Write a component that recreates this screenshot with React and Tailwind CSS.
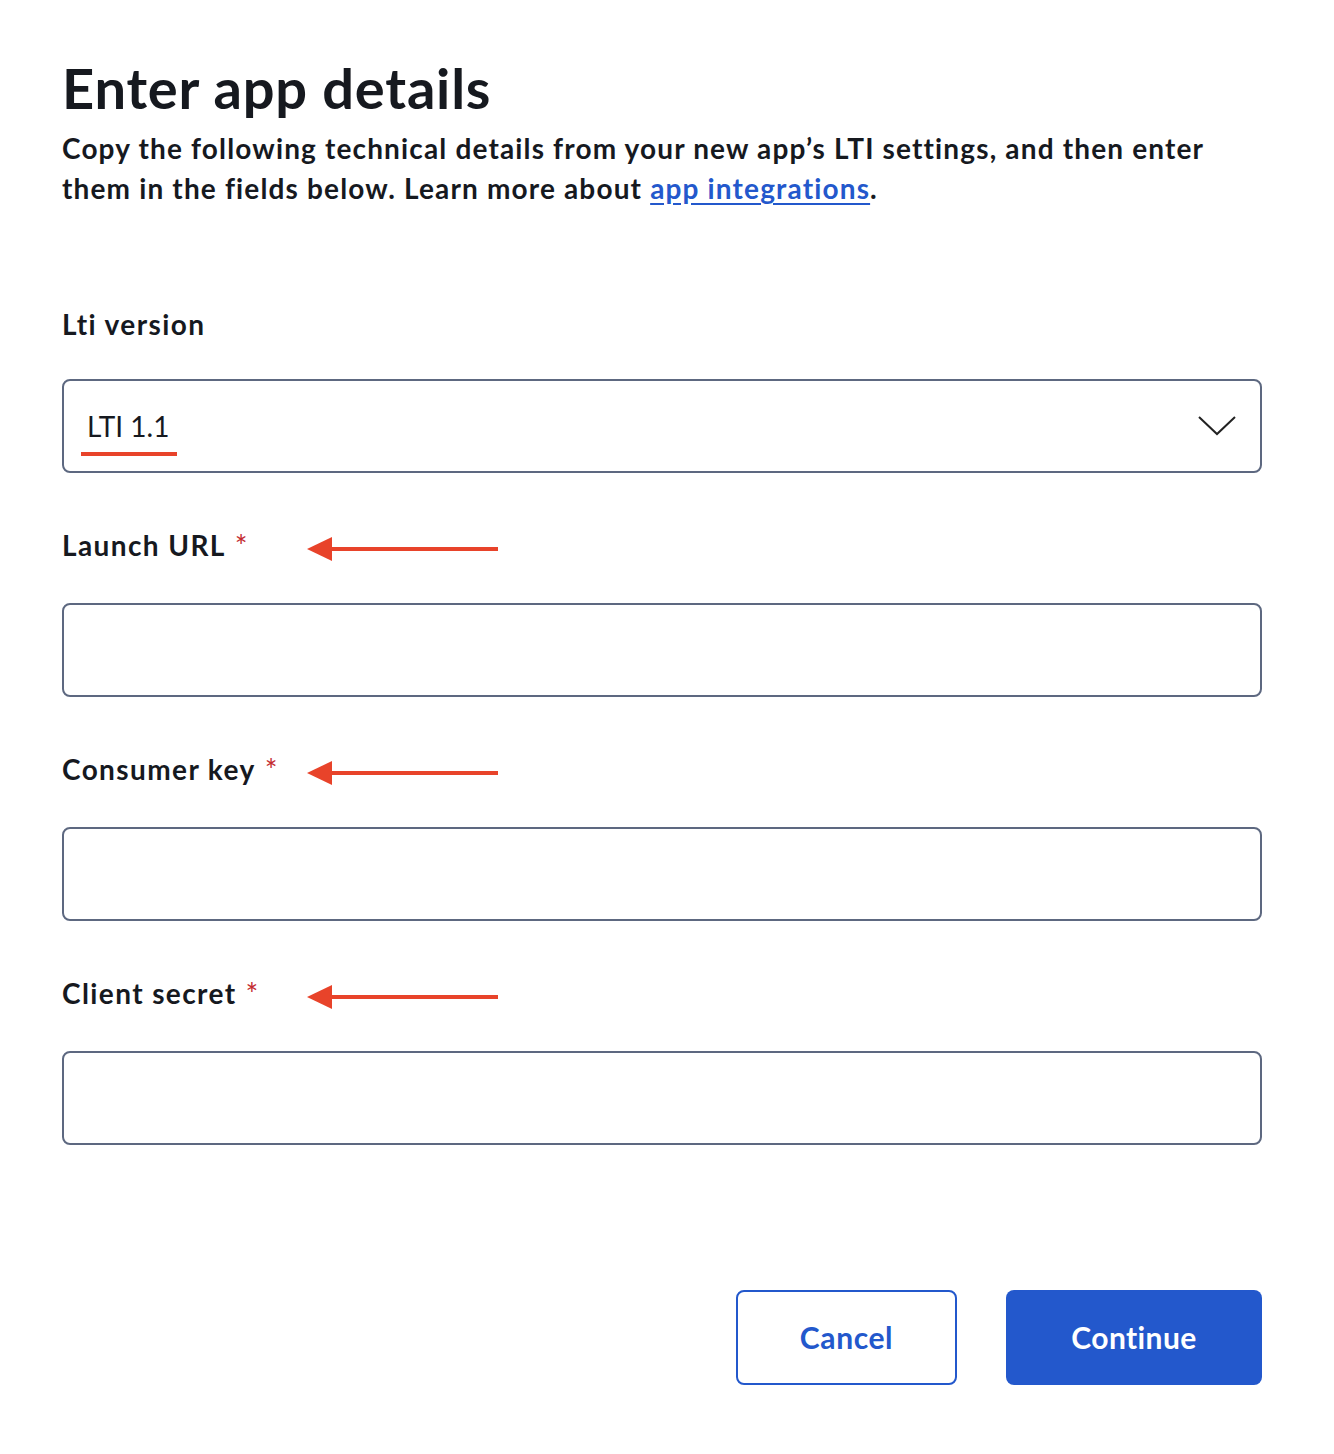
import React from 'react';

function Arrow() {
  return (
    <svg width="192" height="26" viewBox="0 0 192 26" className="absolute left-[245px] top-[11px]">
      <polygon points="0,13 25,1 25,25" fill="#e8432a" />
      <rect x="22" y="11" width="169" height="4" fill="#e8432a" />
    </svg>
  );
}

function Field({ label }) {
  return (
    <div className="mt-[52px]">
      <div className="relative flex items-start h-[40px]">
        <span className="text-[28px] font-bold leading-[40px] tracking-[1.4px] text-[#16191f]">{label}</span>
        <span className="ml-[9px] mt-[5px] text-[30px] leading-[30px] text-[#c42b30]">*</span>
        <Arrow />
      </div>
      <input
        type="text"
        className="mt-[38px] block w-full h-[94px] rounded-[8px] border-2 border-[#5d6880] bg-white px-4 text-[28px] outline-none"
      />
    </div>
  );
}

function App() {
  return (
    <div className="min-h-screen bg-white font-['Lato','Liberation_Sans',sans-serif] text-[#16191f]">
      <main className="ml-[62px] w-[1200px] pt-[52px] pb-[68px]">
        {/* Header */}
        <h1 className="text-[56px] font-bold leading-[72px] tracking-[0.8px]">Enter app details</h1>
        <p className="mt-[4px] text-[28px] font-bold leading-[40px] tracking-[1.15px]">
          Copy the following technical details from your new app’s LTI settings, and then enter
          <br />
          them in the fields below. Learn more about{' '}
          <a href="#" className="text-[#2358cc] underline underline-offset-4">app integrations</a>.
        </p>

        {/* Lti version */}
        <div className="mt-[96px]">
          <div className="text-[28px] font-bold leading-[40px] tracking-[1.4px]">Lti version</div>
          <div className="mt-[35px] relative flex items-center h-[94px] rounded-[8px] border-2 border-[#5d6880] px-[23px]">
            <span className="relative text-[28px] leading-[40px]">
              LTI 1.1
              <span className="absolute left-[-6px] right-[-8px] bottom-[-10px] h-[4px] bg-[#e8432a]" />
            </span>
            <svg width="40" height="22" viewBox="0 0 40 22" className="ml-auto">
              <polyline points="2,2 20,19 38,2" fill="none" stroke="#222" strokeWidth="2" />
            </svg>
          </div>
        </div>

        <Field label="Launch URL" />
        <Field label="Consumer key" />
        <Field label="Client secret" />

        {/* Actions */}
        <div className="mt-[145px] flex justify-end gap-[49px]">
          <button className="h-[95px] w-[221px] rounded-[8px] border-2 border-[#2358cc] bg-white text-[30px] font-bold tracking-[0.6px] text-[#2358cc]">
            Cancel
          </button>
          <button className="h-[95px] w-[256px] rounded-[8px] bg-[#2358cc] text-[30px] font-bold tracking-[0.4px] text-white">
            Continue
          </button>
        </div>
      </main>
    </div>
  );
}

export default App;
